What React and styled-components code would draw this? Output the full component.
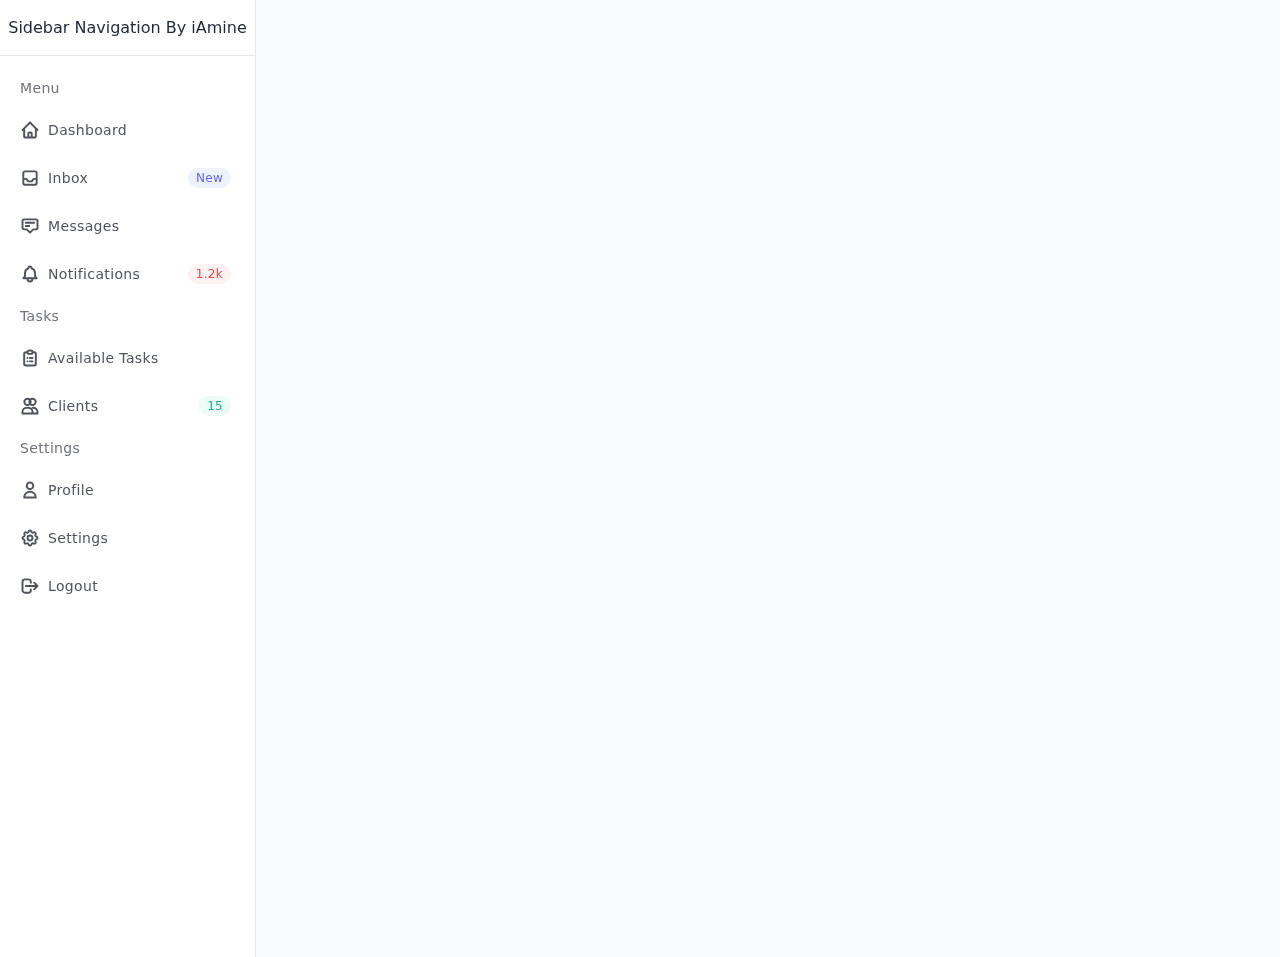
import styled, { createGlobalStyle } from 'styled-components';

const GlobalStyle = createGlobalStyle`
  * { box-sizing: border-box; }
  html, body { margin: 0; padding: 0; }
  body {
    font-family: "DejaVu Sans", sans-serif;
    color: #1f2937;
    -webkit-font-smoothing: antialiased;
    background: #fff;
  }
`;

const Page = styled.div`
  display: flex;
  min-height: 957px;
`;

const Sidebar = styled.aside`
  display: flex;
  flex-direction: column;
  width: 256px;
  border-right: 1px solid #e5e7eb;
  will-change: transform;
`;

const Brand = styled.div`
  display: flex;
  align-items: center;
  justify-content: center;
  height: 56px;
  border-bottom: 1px solid #e5e7eb;
  font-size: 16px;
  white-space: nowrap;
  color: #1f2937;
`;

const Menu = styled.ul`
  display: flex;
  flex-direction: column;
  gap: 4px;
  list-style: none;
  margin: 0;
  padding: 16px 0;
`;

const SectionTitle = styled.li`
  display: flex;
  align-items: center;
  height: 32px;
  padding: 0 20px;
  font-size: 14px;
  letter-spacing: 0.025em;
  color: #6f737a;
`;

const MenuLink = styled.a`
  display: flex;
  align-items: center;
  height: 44px;
  padding: 0 24px 0 20px;
  font-size: 14px;
  letter-spacing: 0.025em;
  color: #4f545c;
  text-decoration: none;
`;

const Icon = styled.svg`
  width: 20px;
  height: 20px;
  flex: none;
  fill: none;
  stroke: currentColor;
  stroke-width: 2.3;
  stroke-linecap: round;
  stroke-linejoin: round;
`;

const Label = styled.span`
  margin-left: 8px;
`;

const badgeColors = {
  indigo: ['#eef2ff', '#6366f1'],
  red: ['#fef2f2', '#ef4444'],
  green: ['#ecfdf5', '#10b981'],
};

const Badge = styled.span`
  margin-left: auto;
  padding: 2px 8px;
  border-radius: 9999px;
  font-size: 12px;
  line-height: 16px;
  letter-spacing: 0.025em;
  background: ${(p) => badgeColors[p.$tone][0]};
  color: ${(p) => badgeColors[p.$tone][1]};
`;

const Main = styled.main`
  flex: 1;
  background: #fafbfd;
`;

const icons = {
  home: 'M3 12l2-2m0 0l7-7 7 7M5 10v10a1 1 0 001 1h3m10-11l2 2m-2-2v10a1 1 0 01-1 1h-3m-6 0a1 1 0 001-1v-4a1 1 0 011-1h2a1 1 0 011 1v4a1 1 0 001 1m-6 0h6',
  inbox: 'M6 4h12a2 2 0 012 2v12a2 2 0 01-2 2H6a2 2 0 01-2-2V6a2 2 0 012-2zM4 13h3.5l2.5 3h4l2.5-3H20',
  messages: 'M7 8h10M7 12h4m1 8l-4-4H5a2 2 0 01-2-2V6a2 2 0 012-2h14a2 2 0 012 2v8a2 2 0 01-2 2h-3l-4 4z',
  bell: 'M15 17h5l-1.405-1.405A2.032 2.032 0 0118 14.158V11a6.002 6.002 0 00-4-5.659V5a2 2 0 10-4 0v.341C7.67 6.165 6 8.388 6 11v3.159c0 .538-.214 1.055-.595 1.436L4 17h5m6 0v1a3 3 0 11-6 0v-1m6 0H9',
  tasks: 'M9 5H7a2 2 0 00-2 2v12a2 2 0 002 2h10a2 2 0 002-2V7a2 2 0 00-2-2h-2M9 5a2 2 0 002 2h2a2 2 0 002-2M9 5a2 2 0 012-2h2a2 2 0 012 2m-3 7h3m-3 4h3m-6-4h.01M9 16h.01',
  clients: 'M12.8 7a3.8 3.8 0 11-7.6 0 3.8 3.8 0 017.6 0zM18.8 7a3.8 3.8 0 11-7.6 0 3.8 3.8 0 017.6 0zM3 21v-2a5 5 0 015-5h2a5 5 0 015 5v2H3zM15 14.2a5 5 0 016 4.8v2h-6',
  profile: 'M16 7a4 4 0 11-8 0 4 4 0 018 0zM12 14a7 7 0 00-7 7h14a7 7 0 00-7-7z',
  settings: 'M10.325 4.317c.426-1.756 2.924-1.756 3.35 0a1.724 1.724 0 002.573 1.066c1.543-.94 3.31.826 2.37 2.37a1.724 1.724 0 001.065 2.572c1.756.426 1.756 2.924 0 3.35a1.724 1.724 0 00-1.066 2.573c.94 1.543-.826 3.31-2.37 2.37a1.724 1.724 0 00-2.572 1.065c-.426 1.756-2.924 1.756-3.35 0a1.724 1.724 0 00-2.573-1.066c-1.543.94-3.31-.826-2.37-2.37a1.724 1.724 0 00-1.065-2.572c-1.756-.426-1.756-2.924 0-3.35a1.724 1.724 0 001.066-2.573c-.94-1.543.826-3.31 2.37-2.37.996.608 2.296.07 2.572-1.065zM15 12a3 3 0 11-6 0 3 3 0 016 0z',
  logout: 'M17 16l4-4m0 0l-4-4m4 4H7m6 4v1a3 3 0 01-3 3H6a3 3 0 01-3-3V7a3 3 0 013-3h4a3 3 0 013 3v1',
};

const menu = [
  { title: 'Menu', items: [
    { icon: 'home', label: 'Dashboard' },
    { icon: 'inbox', label: 'Inbox', badge: 'New', tone: 'indigo' },
    { icon: 'messages', label: 'Messages' },
    { icon: 'bell', label: 'Notifications', badge: '1.2k', tone: 'red' },
  ] },
  { title: 'Tasks', items: [
    { icon: 'tasks', label: 'Available Tasks' },
    { icon: 'clients', label: 'Clients', badge: '15', tone: 'green' },
  ] },
  { title: 'Settings', items: [
    { icon: 'profile', label: 'Profile' },
    { icon: 'settings', label: 'Settings' },
    { icon: 'logout', label: 'Logout' },
  ] },
];

function App() {
  return (
    <Page>
      <GlobalStyle />
      <Sidebar>
        <Brand>Sidebar Navigation By iAmine</Brand>
        <Menu>
          {menu.map((section) => [
            <SectionTitle key={section.title}>{section.title}</SectionTitle>,
            ...section.items.map((item) => (
              <li key={item.label}>
                <MenuLink href="#">
                  <Icon viewBox="0 0 24 24"><path d={icons[item.icon]} /></Icon>
                  <Label>{item.label}</Label>
                  {item.badge && <Badge $tone={item.tone}>{item.badge}</Badge>}
                </MenuLink>
              </li>
            )),
          ])}
        </Menu>
      </Sidebar>
      <Main />
    </Page>
  );
}

export default App;
